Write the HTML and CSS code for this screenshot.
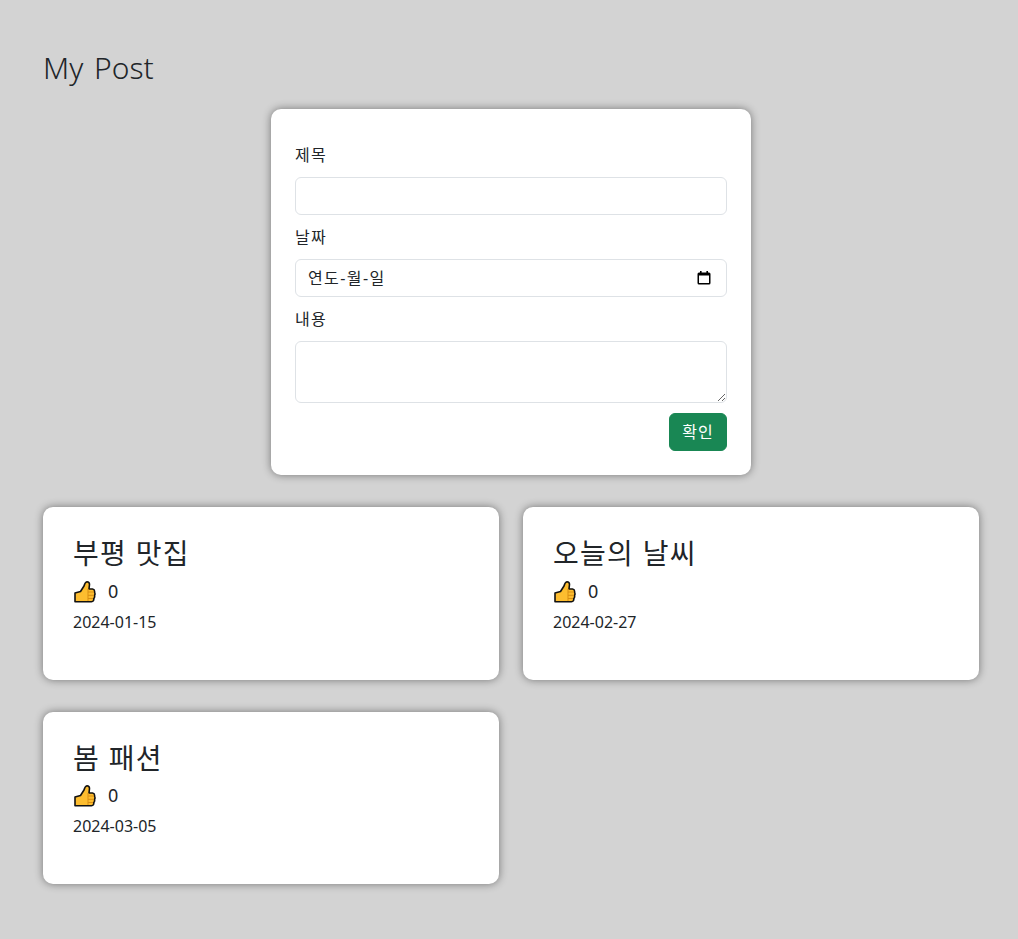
FILE: index.html
```html
<!DOCTYPE html>
<html lang="ko">
<head>
<meta charset="utf-8">
<title>My Post</title>
<link rel="stylesheet" href="styles.css">
</head>
<body>
<main class="page">
  <h1 class="page-title">My Post</h1>
  <form class="form-card">
    <div class="field">
      <label class="field-label" for="title">제목</label>
      <input class="control" id="title" type="text">
    </div>
    <div class="field">
      <label class="field-label">날짜</label>
      <div class="control date-control">
        <span class="placeholder">연도-월-일</span>
        <svg class="calendar" viewBox="0 0 14 14" width="14" height="14" aria-hidden="true">
          <path d="M3 0h1.6v1.500h4.800V0H11v1.500h1A1.500 1.500 0 0 1 13.500 3v9a1.500 1.500 0 0 1-1.500 1.500H2A1.500 1.500 0 0 1 .5 12V3A1.500 1.500 0 0 1 2 1.500h1V0zM2 4.600V12h10V4.600H2z" fill="#000"/>
        </svg>
      </div>
    </div>
    <div class="field">
      <label class="field-label" for="content">내용</label>
      <textarea class="control textarea" id="content"></textarea>
    </div>
    <div class="actions">
      <button class="submit" type="button">확인</button>
    </div>
  </form>
  <section class="post-grid">
    <article class="post-card">
      <h2 class="post-title">부평 맛집</h2>
      <div class="likes">
        <svg class="thumb" viewBox="0 0 22 24" width="22" height="24" aria-hidden="true"><path d="M1 14L6.500 12.500L10 7Q11 3 13 2.700Q15.500 2.700 15.500 5.500L15 10H18.500Q21 10.500 20.500 13Q21.500 15 20.500 16.500Q21 18.500 19.800 19.500Q20 22.700 17.500 22.700H1Z" fill="#fdbd2f" stroke="#111" stroke-width="1.600" stroke-linejoin="round"/><path d="M14 13H20M14 16.300H20M14 19.500H19M14 10V22" fill="none" stroke="#d98f14" stroke-width="1"/></svg>
        <span class="like-count">0</span>
      </div>
      <p class="post-date">2024-01-15</p>
    </article>
    <article class="post-card">
      <h2 class="post-title">오늘의 날씨</h2>
      <div class="likes">
        <svg class="thumb" viewBox="0 0 22 24" width="22" height="24" aria-hidden="true"><path d="M1 14L6.500 12.500L10 7Q11 3 13 2.700Q15.500 2.700 15.500 5.500L15 10H18.500Q21 10.500 20.500 13Q21.500 15 20.500 16.500Q21 18.500 19.800 19.500Q20 22.700 17.500 22.700H1Z" fill="#fdbd2f" stroke="#111" stroke-width="1.600" stroke-linejoin="round"/><path d="M14 13H20M14 16.300H20M14 19.500H19M14 10V22" fill="none" stroke="#d98f14" stroke-width="1"/></svg>
        <span class="like-count">0</span>
      </div>
      <p class="post-date">2024-02-27</p>
    </article>
    <article class="post-card">
      <h2 class="post-title">봄 패션</h2>
      <div class="likes">
        <svg class="thumb" viewBox="0 0 22 24" width="22" height="24" aria-hidden="true"><path d="M1 14L6.500 12.500L10 7Q11 3 13 2.700Q15.500 2.700 15.500 5.500L15 10H18.500Q21 10.500 20.500 13Q21.500 15 20.500 16.500Q21 18.500 19.800 19.500Q20 22.700 17.500 22.700H1Z" fill="#fdbd2f" stroke="#111" stroke-width="1.600" stroke-linejoin="round"/><path d="M14 13H20M14 16.300H20M14 19.500H19M14 10V22" fill="none" stroke="#d98f14" stroke-width="1"/></svg>
        <span class="like-count">0</span>
      </div>
      <p class="post-date">2024-03-05</p>
    </article>
  </section>
</main>
</body>
</html>
```
FILE: styles.css
```css
* { box-sizing: border-box; }
html, body { margin: 0; }
body {
  min-height: 939px;
  background: #d3d3d3;
  color: #212529;
  font-family: "Noto Sans", "Noto Sans CJK KR", sans-serif;
  font-size: 16px;
  line-height: 24px;
}
.page { padding: 48px 39px 55px 43px; }
.page-title {
  margin: 0 0 21px;
  font-size: 30px;
  font-weight: 300;
  line-height: 40px;
  word-spacing: 3px;
}
.form-card {
  width: 480px;
  margin: 0 auto 32px;
  padding: 24px;
  background: #fff;
  border-radius: 10px;
  box-shadow: 0 0 8px rgba(0, 0, 0, .45);
}
.field { padding-top: 10px; }
.field-label {
  display: block;
  margin-bottom: 10px;
  font-size: 16px;
  letter-spacing: 1.200px;
}
.control {
  display: block;
  width: 100%;
  height: 38px;
  padding: 6px 12px;
  background: #fff;
  border: 1px solid #dee2e6;
  border-radius: 6px;
  font: inherit;
  color: #212529;
}
.date-control {
  display: flex;
  align-items: center;
  justify-content: space-between;
  padding-right: 15px;
}
.placeholder { letter-spacing: 1.400px; }
.calendar { flex: none; }
.textarea { height: 62px; resize: vertical; }
.actions { display: flex; justify-content: flex-end; margin-top: 10px; }
.submit {
  height: 38px;
  padding: 0 12px;
  background: #198754;
  border: 1px solid #198754;
  border-radius: 6px;
  color: #fff;
  font: inherit;
  letter-spacing: 1.200px;
}
.post-grid {
  display: grid;
  grid-template-columns: 456px 456px;
  column-gap: 24px;
  row-gap: 32px;
}
.post-card {
  height: 172.500px;
  padding: 24px 30px;
  background: #fff;
  border-radius: 10px;
  box-shadow: 0 0 8px rgba(0, 0, 0, .45);
}
.post-title {
  margin: 0;
  font-size: 28px;
  font-weight: 400;
  line-height: 45.500px;
  letter-spacing: 1.300px;
}
.likes {
  display: flex;
  align-items: center;
  gap: 12px;
  height: 28px;
  padding-left: 1px;
}
.like-count { font-size: 18px; }
.post-date { margin: 5px 0 0; font-size: 16px; }
```
